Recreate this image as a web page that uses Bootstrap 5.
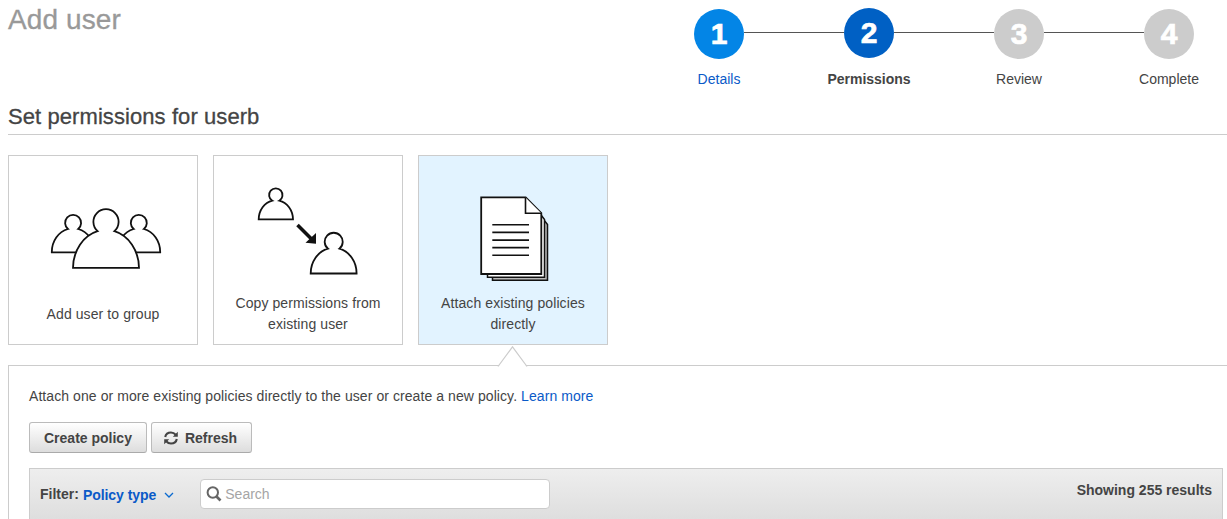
<!DOCTYPE html>
<html lang="en">
<head>
<meta charset="utf-8">
<title>Add user</title>
<link href="https://cdn.jsdelivr.net/npm/bootstrap@5.3.0/dist/css/bootstrap.min.css" rel="stylesheet">
<style>
  body { font: 14px/21px "Liberation Sans", Arial, sans-serif; color: #444; overflow: hidden; height: 519px; }
  a { color: #0a5ac8; text-decoration: none; }
  .page-head { height: 95px; padding: 0 33px 0 8px; }
  .page-title { font-size: 28px; line-height: 32px; color: #999; margin: 4px 0 0; font-weight: 400; letter-spacing: .1px; -webkit-text-stroke: .3px #999; }
  .section-title { font-size: 22px; line-height: 28px; margin: 8px 0 0 8px; padding-bottom: 3px; border-bottom: 1px solid #ccc; font-weight: 400; letter-spacing: .08px; -webkit-text-stroke: .3px #444; }
  .wizard { width: 500px; padding-top: 9px; }
  .wizard-step { width: 50px; }
  .wizard-step .dot { width: 50px; height: 50px; background: #ccc; color: #fff; font-size: 30px; line-height: 50px; font-weight: 700; -webkit-text-stroke: .7px #fff; }
  .wizard-step .dot-done { background: #0385e6; }
  .wizard-step .dot-now { background: #0060c4; margin-top: -1px; margin-bottom: 1px; }
  .wizard-label { margin-top: 10px; }
  .wizard-line { height: 1px; background: #555; margin-top: 23px; }
  .choices { gap: 15px; padding: 20px 0 0 8px; }
  .choice { width: 190px; height: 190px; border: 1px solid #ccc; background: #fff; }
  .choice.picked { background: #e2f3ff; }
  .choice svg { width: 188px; height: 137px; }
  .choice-label { height: 42px; padding: 0 18px; letter-spacing: .09px; }
  .panel { margin: 20px 0 0 8px; border: 1px solid #ccc; border-width: 1px 0 0 1px; padding: 20px 4px 0 20px; height: 170px; }
  .pointer { left: 488px; top: -20px; width: 31px; height: 21px; }
  .intro { letter-spacing: .073px; }
  .tools { padding-top: 15px; }
  .tool-btn { height: 31px; border: 1px solid #bbb; border-bottom-color: #aaa; border-radius: 3px; background: linear-gradient(#fff, #ddd); color: #444; font-size: 14px; font-weight: 700; line-height: 21px; padding: 5px 14px 3px; }
  .tool-btn.with-icon { padding-left: 12px; }
  .tool-btn.with-icon svg { margin: -2px 7px 0 0; }
  .filter-bar { height: 70px; margin-top: 15px; border: 1px solid #ccc; background: linear-gradient(#eee, #dedede 50px); padding: 10px 10px 0; }
  .search-box { width: 350px; height: 30px; border: 1px solid #ccc; border-radius: 4px; background: #fff; color: #a5a5a5; padding-left: 5px; margin-left: 26px; }
  .search-box svg { margin-right: 3px; }
  .filter-name { padding-top: 5px; }
  .filter-name a { letter-spacing: -.05px; padding-top: 1px; }
  .results { padding-top: 1px; }
</style>
</head>
<body>
<header class="page-head d-flex justify-content-between align-items-start">
  <h1 class="page-title">Add user</h1>
  <div class="wizard d-flex text-nowrap">
    <div class="wizard-step d-flex flex-column align-items-center"><div class="dot dot-done rounded-circle text-center">1</div><a href="#" class="wizard-label">Details</a></div>
    <div class="wizard-line flex-fill"></div>
    <div class="wizard-step d-flex flex-column align-items-center"><div class="dot dot-now rounded-circle text-center">2</div><div class="wizard-label fw-bold">Permissions</div></div>
    <div class="wizard-line flex-fill"></div>
    <div class="wizard-step d-flex flex-column align-items-center"><div class="dot rounded-circle text-center">3</div><div class="wizard-label">Review</div></div>
    <div class="wizard-line flex-fill"></div>
    <div class="wizard-step d-flex flex-column align-items-center"><div class="dot rounded-circle text-center">4</div><div class="wizard-label">Complete</div></div>
  </div>
</header>
<h2 class="section-title">Set permissions for userb</h2>
<div class="choices d-flex">
  <div class="choice">
    <svg class="d-block" viewBox="9 156 188 137" fill="#fff" stroke="#111" stroke-width="1.8">
      <path d="M51.8 252.3A21.3 23.7 0 0 1 68 229A8 8 0 1 1 78.2 229A21.3 23.7 0 0 1 94.4 252.3Z"/>
      <path d="M117.5 252.3A21.3 23.7 0 0 1 133.7 229A8 8 0 1 1 143.9 229A21.3 23.7 0 0 1 160.2 252.3Z"/>
      <path d="M73 267.9A33 38.3 0 0 1 97.6 231.2A12.6 12.6 0 1 1 114.4 231.2A33 38.3 0 0 1 139 267.9Z"/>
    </svg>
    <div class="choice-label d-flex align-items-center justify-content-center text-center">Add user to group</div>
  </div>
  <div class="choice">
    <svg class="d-block" viewBox="214 156 188 137" fill="#fff" stroke="#111" stroke-width="1.8">
      <path d="M258.7 219.3A17.2 19.3 0 0 1 272.3 200.7A6.7 6.7 0 1 1 279.3 200.7A17.2 19.3 0 0 1 293 219.3Z"/>
      <path d="M310.7 273.5A23 25.6 0 0 1 328 248.7A9 9 0 1 1 339.4 248.7A23 25.6 0 0 1 356.6 273.5Z"/>
      <path d="M297.5 225L312 239.5" stroke-width="3.5"/>
      <path d="M316 233V243.700L305.500 242.700Z" fill="#111" stroke="none"/>
    </svg>
    <div class="choice-label d-flex align-items-center justify-content-center text-center">Copy permissions from existing user</div>
  </div>
  <div class="choice picked">
    <svg class="d-block" viewBox="419 156 188 137" fill="#fff" stroke="#111" stroke-width="1.5">
      <path d="M492.5 226V280.3H547.5V224.5L540 215" fill="#bbb"/>
      <path d="M487.5 222V277.2H544.5V219.5L538 211"/>
      <path d="M481.2 197.3H525.7L541.3 213V274H481.2Z" stroke-width="1.8"/>
      <path d="M525.5 197.5V213.2H541.3M492.3 224.7H529M492.3 232.4H529M492.3 240.1H529M492.3 247.6H529M492.3 255.3H529" stroke-width="1.6"/>
    </svg>
    <div class="choice-label d-flex align-items-center justify-content-center text-center">Attach existing policies directly</div>
  </div>
</div>
<section class="panel position-relative">
  <svg class="pointer position-absolute" viewBox="0 0 31 21"><path d="M1 21L15.5 .8L30 21Z" fill="#fff"/><path d="M1 20.5L15.5 .8L30 20.5" fill="none" stroke="#ccc" stroke-width="1.2"/></svg>
  <div class="intro">Attach one or more existing policies directly to the user or create a new policy. <a href="#">Learn more</a></div>
  <div class="d-flex gap-1 tools">
    <button type="button" class="tool-btn">Create policy</button>
    <button type="button" class="tool-btn with-icon d-flex align-items-center"><svg width="14" height="14" viewBox="0 0 14 14" fill="none" stroke="#444" stroke-width="2.1"><path d="M1.2 6C1.8 3 4.2 1.5 7 1.5C9 1.5 10.5 2.3 11.8 3.7M12.8 8C12.2 11 9.8 12.5 7 12.5C5 12.5 3.5 11.7 2.2 10.3"/><path d="M13.8 .8V5.8H8.8ZM.2 13.2V8.2H5.2Z" fill="#444" stroke="none"/></svg>Refresh</button>
  </div>
  <div class="filter-bar d-flex align-items-start">
    <div class="filter-name d-flex fw-bold">Filter:<a href="#" class="ms-1">Policy type</a>
      <svg width="10" height="8" viewBox="0 0 10 8" fill="none" stroke="#0a6ad0" stroke-width="1.3" class="ms-2 mt-2"><path d="M1 1L5 5L9 1"/></svg>
    </div>
    <div class="search-box d-flex align-items-center"><svg width="16" height="16" viewBox="0 0 16 16" fill="none" stroke="#666" stroke-width="2"><circle cx="6.8" cy="6.5" r="5.2"/><path d="M10.5 10.5L14.5 14.5" stroke-width="2.6"/></svg>Search</div>
    <div class="ms-auto fw-bold results">Showing 255 results</div>
  </div>
</section>
<script src="https://cdn.jsdelivr.net/npm/bootstrap@5.3.0/dist/js/bootstrap.bundle.min.js"></script>
</body>
</html>
